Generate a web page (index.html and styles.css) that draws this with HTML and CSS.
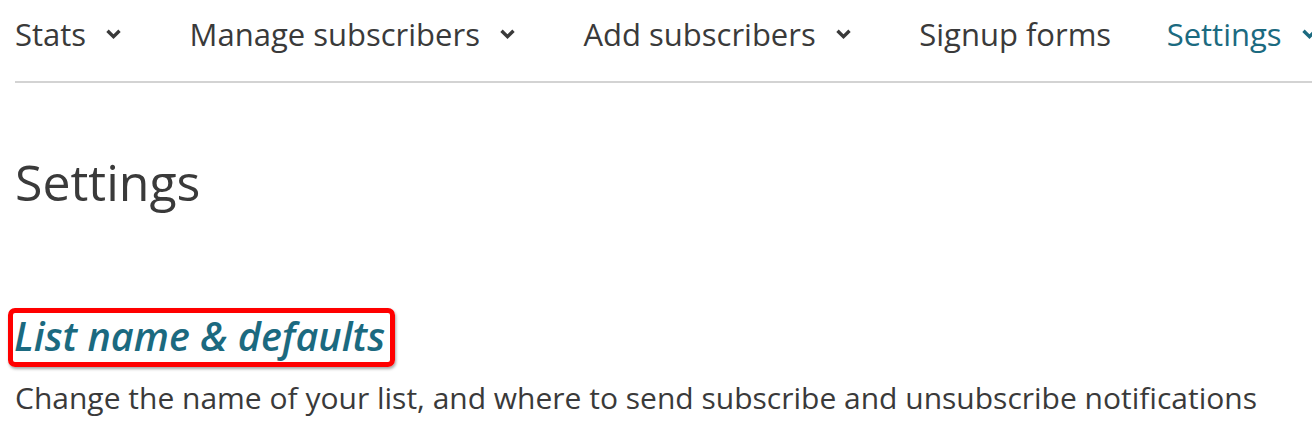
FILE: index.html
```html
<!DOCTYPE html>
<html>
<head>
<meta charset="utf-8">
<link rel="stylesheet" href="styles.css">
</head>
<body>
<div class="page">
  <nav class="tabs">
    <a class="tab">Stats <svg class="chev" viewBox="0 0 15 10"><path d="M1.5 1.8 L7.5 7.6 L13.5 1.8"/></svg></a>
    <a class="tab">Manage subscribers <svg class="chev" viewBox="0 0 15 10"><path d="M1.5 1.8 L7.5 7.6 L13.5 1.8"/></svg></a>
    <a class="tab">Add subscribers <svg class="chev" viewBox="0 0 15 10"><path d="M1.5 1.8 L7.5 7.6 L13.5 1.8"/></svg></a>
    <a class="tab plain">Signup forms</a>
    <a class="tab active">Settings <svg class="chev" viewBox="0 0 15 10"><path d="M1.5 1.8 L7.5 7.6 L13.5 1.8"/></svg></a>
  </nav>
  <h1 class="title">Settings</h1>
  <section class="setting">
    <h2 class="setting-title"><span class="highlight">List name &amp; defaults</span></h2>
    <p class="setting-desc">Change the name of your list, and where to send subscribe and unsubscribe notifications</p>
  </section>
</div>
</body>
</html>
```
FILE: styles.css
```css
html, body {
  margin: 0;
  padding: 0;
  background: #fff;
  overflow: hidden;
}
body {
  font-family: "Open Sans", "Liberation Sans", sans-serif;
  color: #3a3a3a;
}
.page {
  padding: 0 0 0 15px;
  width: 1400px;
}
.tabs {
  display: flex;
  align-items: flex-start;
  gap: 68.5px;
  height: 83px;
  padding-top: 13px;
  border-bottom: 2px solid #d3d3d3;
  box-sizing: border-box;
}
.tab {
  display: flex;
  align-items: center;
  gap: 20px;
  font-size: 31px;
  font-weight: 500;
  line-height: 42px;
  color: #3a3a3a;
  white-space: nowrap;
}
.tab.plain {
  margin-right: -13px;
}
.tab.active {
  color: #1b6a80;
}
.chev {
  width: 15px;
  height: 10px;
  fill: none;
  stroke: currentColor;
  stroke-width: 3.4;
  stroke-linecap: butt;
  stroke-linejoin: miter;
}
.title {
  margin: 65px 0 0;
  font-size: 50px;
  font-weight: 500;
  line-height: 68px;
  color: #3a3a3a;
}
.setting {
  margin-top: 92px;
}
.setting-title {
  display: flex;
  margin: 0;
  font-size: 39.6px;
  font-weight: 600;
  font-style: italic;
  color: #1b6a80;
}
.highlight {
  display: block;
  margin-left: -7px;
  padding: 2px 5px 4px 1px;
  border: 5px solid #ff0000;
  border-radius: 7px;
  box-shadow: 1px 2px 3px rgba(0,0,0,0.35);
  line-height: 43px;
}
.setting-desc {
  margin: 11px 0 0;
  font-size: 30px;
  line-height: 40px;
  color: #3a3a3a;
}
```
